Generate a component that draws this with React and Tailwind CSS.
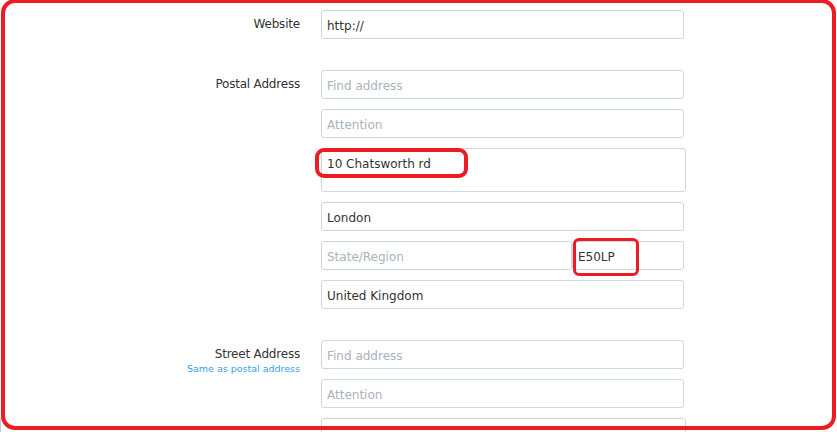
import React from "react";

const inputCls =
  "block h-[29px] border border-[#cdd7e1] rounded-[3px] bg-white pl-[5px] pr-[5px] pt-[2px] text-[12px] text-[#333] placeholder:text-[#a9b3be] outline-none font-['DejaVu_Sans',sans-serif]";

function Field({ placeholder, value, className = "w-[363px]" }) {
  return (
    <input
      className={`${inputCls} ${className}`}
      placeholder={placeholder}
      defaultValue={value}
      readOnly
    />
  );
}

function Row({ label, sub, children }) {
  return (
    <div className="flex">
      <div className="w-[300px] shrink-0 text-right pt-[6px]">
        <div className="text-[12px] leading-[16px] text-[#333] tracking-[-0.2px]">{label}</div>
        {sub && (
          <div className="text-[9.5px] leading-[14px] text-[#3a9fe6]">{sub}</div>
        )}
      </div>
      <div className="ml-[21px] flex flex-col gap-[10px]">{children}</div>
    </div>
  );
}

export default function App() {
  return (
    <div className="relative w-[837px] h-[432px] overflow-hidden bg-white font-['DejaVu_Sans',sans-serif]">
      <div className="flex flex-col gap-[31px] pt-[10px]">
        <Row label="Website">
          <Field value="http://" />
        </Row>
        <Row label="Postal Address">
          <Field placeholder="Find address" />
          <Field placeholder="Attention" />
          <textarea
            className="block w-[365px] h-[44px] resize-none border border-[#cdd7e1] rounded-[3px] px-[5px] pt-[7px] text-[12px] leading-[16px] text-[#333] outline-none font-['DejaVu_Sans',sans-serif]"
            defaultValue="10 Chatsworth rd"
            readOnly
          />
          <Field value="London" />
          <div className="flex w-[363px]">
            <Field placeholder="State/Region" className="w-[251px]" />
            <Field value="E50LP" className="w-[112px]" />
          </div>
          <Field value="United Kingdom" />
        </Row>
        <Row label="Street Address" sub="Same as postal address">
          <Field placeholder="Find address" />
          <Field placeholder="Attention" />
          <textarea
            className="block w-[365px] h-[44px] resize-none border border-[#cdd7e1] rounded-[3px] px-[5px] pt-[6px] text-[12px] text-[#333] outline-none"
            readOnly
          />
        </Row>
      </div>

      {/* annotations */}
      <div className="pointer-events-none absolute left-[315px] top-[148px] w-[153px] h-[30px] border-[4px] border-[#ed1c24] rounded-[9px]" />
      <div className="pointer-events-none absolute left-[573px] top-[238px] w-[66px] h-[38px] border-[3px] border-[#ed1c24] rounded-[6px]" />
      <div className="pointer-events-none absolute left-0 top-[418px] w-[1px] h-[14px] bg-[#c8c8c8]" />
      <div className="pointer-events-none absolute left-[1px] top-[-1px] w-[835px] h-[431px] border-4 border-[#ed1c24] rounded-[14px]" />
    </div>
  );
}
